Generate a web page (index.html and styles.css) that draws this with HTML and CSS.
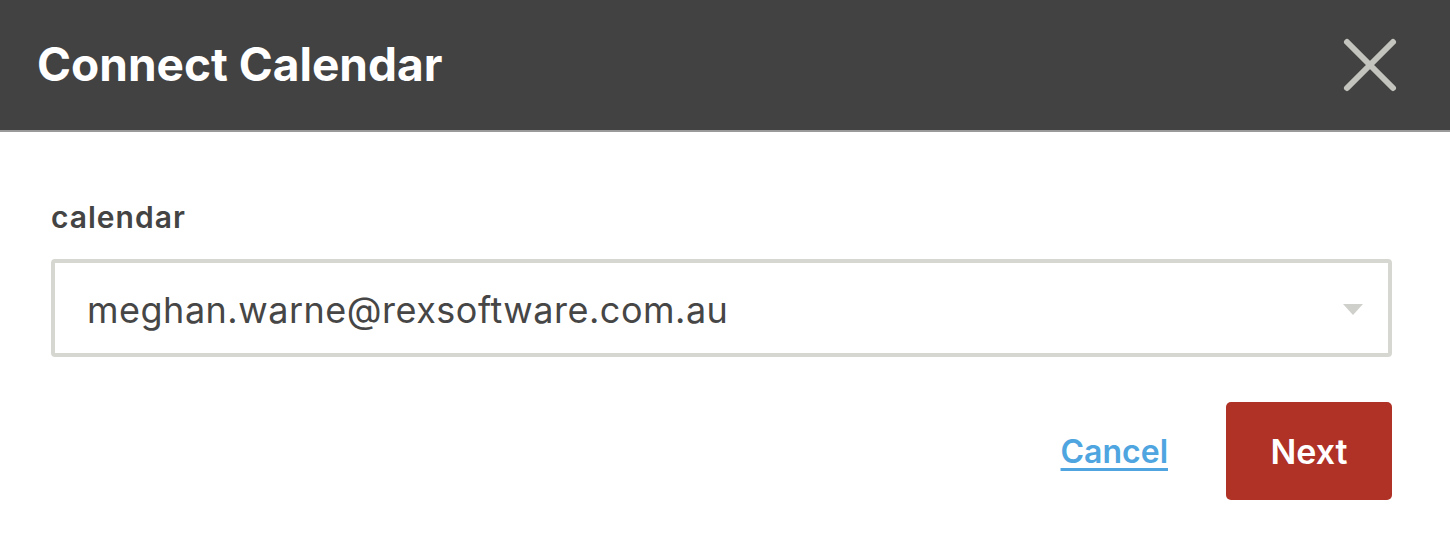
FILE: index.html
```html
<!DOCTYPE html>
<html>
<head>
<meta charset="utf-8">
<link rel="stylesheet" href="styles.css">
</head>
<body>
<div class="dialog">
  <header class="dialog-header">
    <h1 class="dialog-title">Connect Calendar</h1>
    <button class="close-btn" aria-label="Close">
      <svg width="56" height="56" viewBox="0 0 56 56"><path d="M5 5 L51 51 M51 5 L5 51" stroke="#c4c4bf" stroke-width="6" stroke-linecap="round" fill="none"/></svg>
    </button>
  </header>
  <main class="dialog-body">
    <label class="field-label">calendar</label>
    <div class="select">
      <span class="select-value">meghan.warne@rexsoftware.com.au</span>
      <span class="select-caret"></span>
    </div>
    <div class="actions">
      <a class="cancel-link" href="#">Cancel</a>
      <button class="next-btn">Next</button>
    </div>
  </main>
</div>
</body>
</html>
```
FILE: styles.css
```css
html, body {
  margin: 0;
  padding: 0;
  background: #ffffff;
}
body {
  font-family: "Inter", "Noto Sans", sans-serif;
  width: 1450px;
  height: 560px;
  overflow: hidden;
}
.dialog {
  display: flex;
  flex-direction: column;
}
.dialog-header {
  background: #424242;
  border-bottom: 2px solid #9a9a9a;
  box-sizing: border-box;
  height: 132px;
  display: flex;
  align-items: center;
  justify-content: space-between;
  padding: 0 52px 0 37px;
}
.dialog-title {
  margin: 0;
  color: #ffffff;
  font-size: 46px;
  font-weight: 700;
  padding-bottom: 2px;
}
.close-btn {
  background: none;
  border: none;
  padding: 0;
  width: 56px;
  height: 56px;
  display: flex;
}
.dialog-body {
  padding: 0 58px 0 51px;
  display: flex;
  flex-direction: column;
}
.field-label {
  margin-top: 68px;
  color: #444444;
  font-size: 30px;
  font-weight: 600;
  line-height: 34px;
  letter-spacing: 1px;
}
.select {
  margin-top: 25px;
  height: 98px;
  box-sizing: border-box;
  border: 4px solid #d7d7d2;
  border-radius: 4px;
  display: flex;
  align-items: center;
  justify-content: space-between;
  padding: 3px 25px 0 32px;
}
.select-value {
  color: #464646;
  font-size: 36px;
  letter-spacing: 0.5px;
}
.select-caret {
  width: 0;
  height: 0;
  border-left: 10px solid transparent;
  border-right: 10px solid transparent;
  border-top: 11px solid #cfcfcb;
  margin-top: -1px;
}
.actions {
  margin-top: 45px;
  display: flex;
  justify-content: flex-end;
  align-items: center;
  gap: 58px;
}
.cancel-link {
  color: #4ea5e0;
  font-size: 32px;
  font-weight: 600;
  text-decoration: underline;
  text-underline-offset: 5px;
  text-decoration-thickness: 3px;
}
.next-btn {
  width: 166px;
  height: 98px;
  background: #b03125;
  border: none;
  border-radius: 5px;
  color: #ffffff;
  font-family: inherit;
  font-size: 34px;
  font-weight: 600;
}
```
